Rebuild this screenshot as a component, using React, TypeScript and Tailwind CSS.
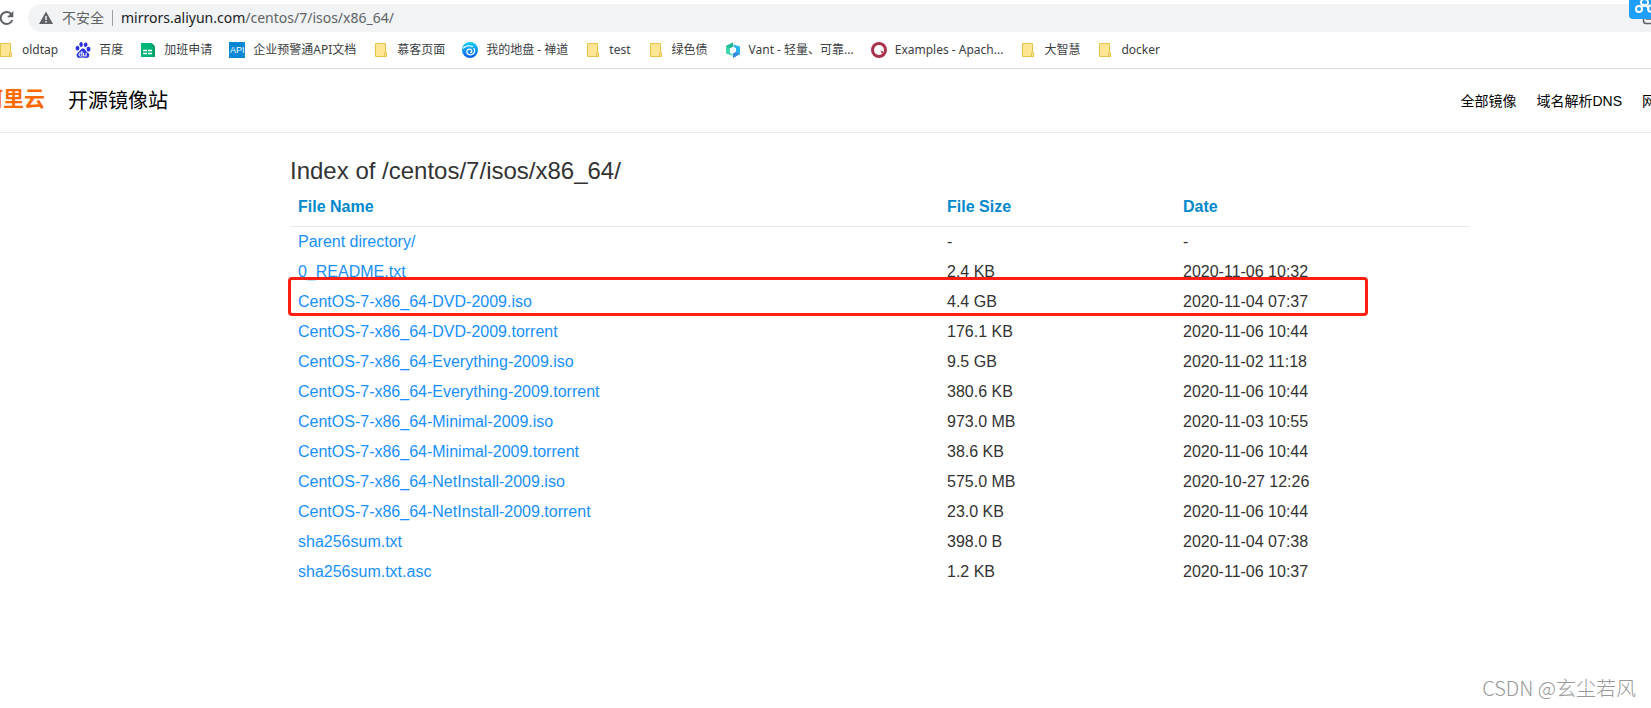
import React from 'react';
import { SiBaidu } from 'react-icons/si';

const FolderIcon = () => (
  <svg width="16" height="16" viewBox="0 0 16 16" className="shrink-0">
    <path d="M2.5 1.5h10v9.5h1v3.5h-11z" fill="#ffe694" stroke="#e8c34a" />
    <path d="M11.5 14.5v-3.2q0-.8.8-.8h1.2v3.2q0 .8-.8.8z" fill="#ffe694" stroke="#e8c34a" />
  </svg>
);

const BaiduIcon = () => <SiBaidu size={16} color="#2932e1" className="shrink-0" />;

const SheetIcon = () => (
  <svg width="16" height="16" viewBox="0 0 16 16" className="shrink-0">
    <path d="M1 1h10.500l3.500 3.500v10.500H1z" fill="#00b578" />
    <path d="M13 5h2v10h-2z" fill="#12995c" />
    <path d="M11.500 1v3.500H15z" fill="#0a8f5c" />
    <path d="M3 8.500h4M8 8.500h4M3 11.500h4M8 11.500h4" stroke="#fff" strokeWidth="1.500" />
  </svg>
);

const ApiIcon = () => (
  <span className="flex h-4 w-4 shrink-0 items-center justify-center overflow-hidden bg-[#0587d4] font-['Liberation_Sans',sans-serif] text-[9px] text-white">
    API
  </span>
);

const ZentaoIcon = () => (
  <svg width="16" height="16" viewBox="0 0 16 16" className="shrink-0">
    <defs>
      <linearGradient id="zentao" x1="0" y1="0" x2="0" y2="1">
        <stop offset="0" stopColor="#0cd0fa" />
        <stop offset="1" stopColor="#0a5cf0" />
      </linearGradient>
    </defs>
    <circle cx="8" cy="8" r="8" fill="url(#zentao)" />
    <path d="M1.500 6C4 3.500 8 3.300 10.500 4.500M12 6.500c1.500 2.500.3 5.500-2.500 6.200-2.700.6-5-1-4.700-3.200.3-2.100 2.600-3 4.200-2 1.300 1 .9 2.800-.5 3" fill="none" stroke="#fff" strokeWidth="1.300" strokeLinecap="round" />
  </svg>
);

const VantIcon = () => (
  <svg width="16" height="16" viewBox="0 0 16 16" className="shrink-0">
    <path d="M8 .500v4.300L5 6v5l2.500 1.300v1.500L1 11.500V4z" fill="#3fd6b0" />
    <path d="M8 .500v4.300L5 6 1 4z" fill="#1fb890" />
    <path d="M8.500 2.500l6.500 2v7.500l-7 4v-4.500l3-1.500V6L8.500 5z" fill="#27b7ee" />
    <path d="M15 12l-7 4v-4.500l3-1.500z" fill="#3b8be0" />
  </svg>
);

const EchartsIcon = () => (
  <svg width="16" height="16" viewBox="0 0 16 16" className="shrink-0">
    <circle cx="8" cy="8" r="8" fill="#aa344d" />
    <circle cx="8" cy="8" r="5" fill="#fff" />
    <path d="M9.500 8.500l3 1.500-1.500 2z" fill="#aa344d" />
  </svg>
);

const bookmarks = [
  { title: 'oldtap', Icon: FolderIcon },
  { title: '百度', Icon: BaiduIcon },
  { title: '加班申请', Icon: SheetIcon },
  { title: '企业预警通API文档', Icon: ApiIcon },
  { title: '慕客页面', Icon: FolderIcon },
  { title: '我的地盘 - 禅道', Icon: ZentaoIcon },
  { title: 'test', Icon: FolderIcon },
  { title: '绿色债', Icon: FolderIcon },
  { title: 'Vant - 轻量、可靠...', Icon: VantIcon },
  { title: 'Examples - Apach...', Icon: EchartsIcon },
  { title: '大智慧', Icon: FolderIcon },
  { title: 'docker', Icon: FolderIcon },
];

const files = [
  { name: 'Parent directory/', size: '-', date: '-' },
  { name: '0_README.txt', size: '2.4 KB', date: '2020-11-06 10:32' },
  { name: 'CentOS-7-x86_64-DVD-2009.iso', size: '4.4 GB', date: '2020-11-04 07:37' },
  { name: 'CentOS-7-x86_64-DVD-2009.torrent', size: '176.1 KB', date: '2020-11-06 10:44' },
  { name: 'CentOS-7-x86_64-Everything-2009.iso', size: '9.5 GB', date: '2020-11-02 11:18' },
  { name: 'CentOS-7-x86_64-Everything-2009.torrent', size: '380.6 KB', date: '2020-11-06 10:44' },
  { name: 'CentOS-7-x86_64-Minimal-2009.iso', size: '973.0 MB', date: '2020-11-03 10:55' },
  { name: 'CentOS-7-x86_64-Minimal-2009.torrent', size: '38.6 KB', date: '2020-11-06 10:44' },
  { name: 'CentOS-7-x86_64-NetInstall-2009.iso', size: '575.0 MB', date: '2020-10-27 12:26' },
  { name: 'CentOS-7-x86_64-NetInstall-2009.torrent', size: '23.0 KB', date: '2020-11-06 10:44' },
  { name: 'sha256sum.txt', size: '398.0 B', date: '2020-11-04 07:38' },
  { name: 'sha256sum.txt.asc', size: '1.2 KB', date: '2020-11-06 10:37' },
];

const BrowserBar: React.FC = () => (
  <div className="relative overflow-hidden border-b border-[#dadce0] pt-1 font-['Noto_Sans','Noto_Sans_CJK_SC',sans-serif]">
    <div className="flex h-7 items-center">
      <button aria-label="Reload" className="w-7 shrink-0">
        <svg width="14" height="16" viewBox="0 0 14 16" fill="none" stroke="#5f6368" strokeWidth="2">
          <path d="M11.500 4.500A6 6 0 1 0 12.300 10" />
          <path d="M13.300 1v6.300H7z" fill="#5f6368" stroke="none" />
        </svg>
      </button>
      <div className="flex h-7 grow items-center rounded-l-full bg-[#f1f3f4] pl-[11px] text-sm">
        <svg width="14" height="14" viewBox="0 0 14 14" className="shrink-0">
          <path d="M7 .500L14 13H0z" fill="#5f6368" />
          <path d="M7 5v4M7 10v1.500" stroke="#f1f3f4" strokeWidth="1.500" />
        </svg>
        <span className="ml-[9px] whitespace-nowrap text-[#5f6368]">不安全</span>
        <span className="mx-2 h-4 w-px shrink-0 bg-[#9aa0a6]" />
        <span className="whitespace-nowrap text-[#5f6368]">
          <span className="text-[#202124]">mirrors.aliyun.com</span>/centos/7/isos/x86_64/
        </span>
      </div>
    </div>
    <nav className="-ml-0.5 flex h-9 items-center gap-[17px] text-xs text-[#3c4043]">
      {bookmarks.map(({ title, Icon }) => (
        <a key={title} href="#" className="flex shrink-0 items-center gap-2 whitespace-nowrap">
          <Icon />
          {title}
        </a>
      ))}
    </nav>
    <svg width="22" height="26" viewBox="0 0 22 26" className="absolute top-0 right-0">
      <path d="M14.500 17v4q0 2.500 2.500 2.500h6M17 19h5" fill="none" stroke="#5f6368" strokeWidth="1.500" />
      <path d="M0 0h22v19H4q-4 0-4-4z" fill="#1e9fff" />
      <g fill="none" stroke="#fff" strokeWidth="2">
        <circle cx="15.500" cy="2.500" r="3.500" />
        <circle cx="10" cy="9" r="3" />
        <path d="M12 7l3-3M16 4l4 5M22 5.500a3.200 3.200 0 0 0-3 3.300 3 3 0 0 0 3 3" />
      </g>
    </svg>
  </div>
);

const SiteHeader: React.FC = () => (
  <header className="flex h-16 items-center justify-between border-b border-[#ebebeb] font-['Liberation_Sans','Noto_Sans_CJK_SC',sans-serif] text-black">
    <div className="flex items-center gap-[23px]">
      <a href="#" className="flex w-[45px] justify-end overflow-hidden whitespace-nowrap pb-1 text-[21px] font-bold text-[#ff6a00]">
        阿里云
      </a>
      <a href="#" className="text-xl">开源镜像站</a>
    </div>
    <nav className="flex gap-5 text-sm whitespace-nowrap">
      <a href="#">全部镜像</a>
      <a href="#">域名解析DNS</a>
      <a href="#" className="w-[9px] overflow-hidden">网</a>
    </nav>
  </header>
);

const FileIndex: React.FC = () => (
  <main className="mr-[181px] ml-[290px] pt-5 font-['Liberation_Sans',sans-serif] text-[#333]">
    <h1 className="text-2xl leading-9">Index of /centos/7/isos/x86_64/</h1>
    <div className="relative">
      <table className="w-full table-fixed text-left">
        <thead>
          <tr className="border-b border-[#e8e8e8] text-[#0088cc]">
            <th className="w-[55%] px-2 pt-1.5 pb-[7px]">File Name</th>
            <th className="w-[20%] px-2 pt-1.5 pb-[7px]">File Size</th>
            <th className="w-[25%] px-2 pt-1.5 pb-[7px]">Date</th>
          </tr>
        </thead>
        <tbody>
          {files.map((file) => (
            <tr key={file.name} className="h-[30px]">
              <td className="px-2">
                <a href="#" className="text-[#1890ff]">{file.name}</a>
              </td>
              <td className="px-2">{file.size}</td>
              <td className="px-2">{file.date}</td>
            </tr>
          ))}
        </tbody>
      </table>
      <div className="absolute top-[88px] right-[102px] -left-0.5 h-[39px] rounded-sm border-3 border-[#ff1e12]" />
    </div>
  </main>
);

export default function App() {
  return (
    <div className="flex min-h-screen flex-col bg-white">
      <BrowserBar />
      <SiteHeader />
      <FileIndex />
      <p className="mt-auto pr-[15px] pb-1.5 text-right font-['Noto_Sans_CJK_SC',sans-serif] text-xl font-light text-[#999]">
        CSDN @玄尘若风
      </p>
    </div>
  );
}
